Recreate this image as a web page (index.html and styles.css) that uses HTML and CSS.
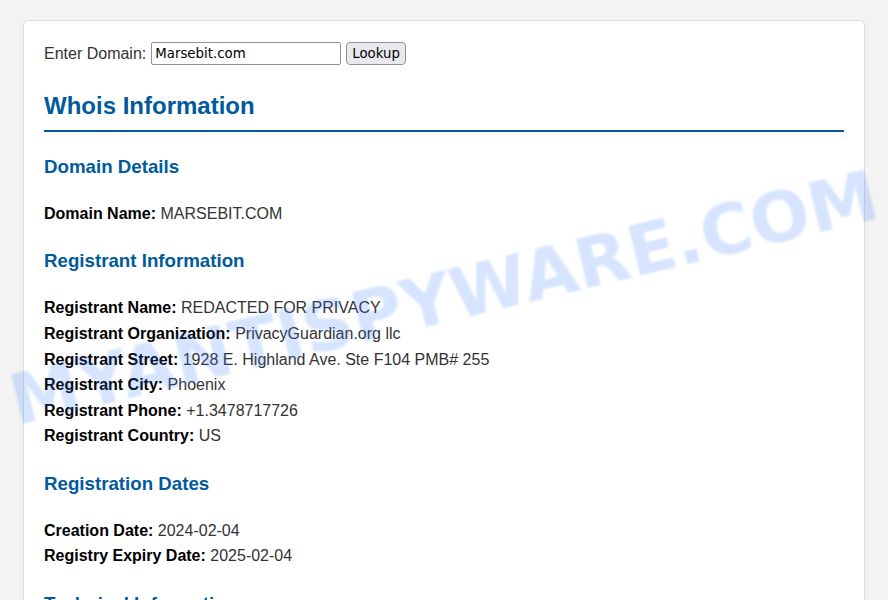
FILE: index.html
```
<!DOCTYPE html>
<html lang="en">
<head>
    <meta charset="UTF-8">
    <meta name="viewport" content="width=device-width, initial-scale=1.0">
    <title>Whois Lookup</title>
    <link rel="stylesheet" href="styles.css">
</head>
<body>
    <div class="container">
        <form method="post" action="">
            <label for="domain">Enter Domain:</label>
            <input type="text" id="domain" name="domain" value="Marsebit.com">
            <button type="submit">Lookup</button>
        </form>

        <h2>Whois Information</h2>

        <h3>Domain Details</h3>
        <p><strong>Domain Name:</strong> MARSEBIT.COM</p>

        <h3>Registrant Information</h3>
        <p>
            <strong>Registrant Name:</strong> REDACTED FOR PRIVACY<br>
            <strong>Registrant Organization:</strong> PrivacyGuardian.org llc<br>
            <strong>Registrant Street:</strong> 1928 E. Highland Ave. Ste F104 PMB# 255<br>
            <strong>Registrant City:</strong> Phoenix<br>
            <strong>Registrant Phone:</strong> +1.3478717726<br>
            <strong>Registrant Country:</strong> US
        </p>

        <h3>Registration Dates</h3>
        <p>
            <strong>Creation Date:</strong> 2024-02-04<br>
            <strong>Registry Expiry Date:</strong> 2025-02-04
        </p>

        <h3>Technical Information</h3>
    </div>

    <div class="watermark"><span>MYANTISPYWARE.COM</span></div>
</body>
</html>
```
FILE: styles.css
```
body {
    margin: 20px;
    font-family: "Liberation Sans", Arial, sans-serif;
    line-height: 1.6;
    background-color: #f3f3f3;
    color: #333;
}

.container {
    max-width: 800px;
    margin: 0 auto;
    padding: 20px;
    background: #fff;
    border: 1px solid #ddd;
    border-radius: 5px;
}

form {
    display: flex;
    align-items: center;
    gap: 5px;
}

h2, h3 {
    color: #005a9c;
}

h2 {
    padding-bottom: 5px;
    border-bottom: 2px solid #005a9c;
}

h3 {
    margin: 20px 0 19px;
}

strong {
    color: #000;
}

input, button {
    box-sizing: border-box;
    height: 23px;
    font-family: "DejaVu Sans", sans-serif;
    color: #000;
    border: 1px solid #8f8f9d;
}

input {
    width: 190px;
    padding: 1px 3px;
    background: #fff;
    border-radius: 2px;
}

button {
    padding: 1px 5px;
    background: #e9e9ed;
    border-radius: 4px;
}

/* Site name laid diagonally over the whole window */
.watermark {
    position: fixed;
    top: 0;
    right: 0;
    bottom: 0;
    left: 0;
    display: flex;
    align-items: center;
    justify-content: center;
    padding-bottom: 4px;
    overflow: hidden;
    pointer-events: none;
}

.watermark span {
    font-family: "DejaVu Sans", sans-serif;
    font-size: 70px;
    font-weight: bold;
    white-space: nowrap;
    color: rgba(50, 120, 255, 0.2);
    transform: rotate(-13.5deg);
    filter: blur(1px);
}
```
